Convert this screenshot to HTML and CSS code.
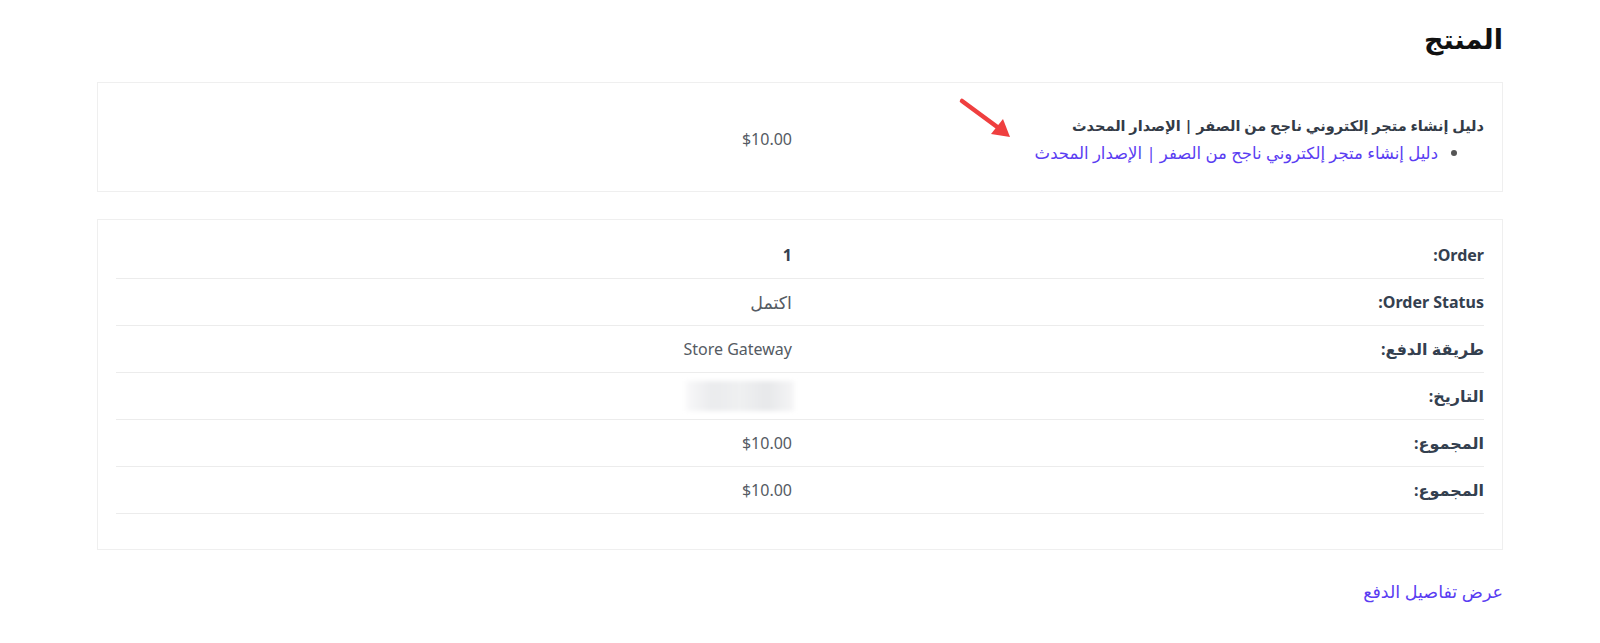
FILE: index.html
```html
<!DOCTYPE html>
<html lang="ar" dir="rtl">
<head>
  <meta charset="UTF-8">
  <title>تفاصيل الطلب</title>
  <link rel="stylesheet" href="styles.css">
</head>
<body>

  <main class="page">
    <h2 class="section-title">المنتج</h2>

    <div class="card card-products">
      <table class="products">
        <tr>
          <td class="product-cell">
            <div class="product-name">دليل إنشاء متجر إلكتروني ناجح من الصفر | الإصدار المحدث</div>
            <ul class="downloads">
              <li><a href="#">دليل إنشاء متجر إلكتروني ناجح من الصفر | الإصدار المحدث</a></li>
            </ul>
          </td>
          <td class="price">$10.00</td>
        </tr>
      </table>

      <!-- annotation arrow -->
      <svg class="arrow" width="60" height="50" viewBox="0 0 60 50">
        <line x1="6" y1="6" x2="44" y2="34" stroke="#ef3f3f" stroke-width="4.5" stroke-linecap="round"/>
        <polygon points="54,42 35,39 47,24" fill="#ef3f3f"/>
      </svg>
    </div>

    <div class="card card-details">
      <table class="details">
        <tr>
          <th>Order:</th>
          <td class="strong">1</td>
        </tr>
        <tr>
          <th>Order Status:</th>
          <td class="ar">اكتمل</td>
        </tr>
        <tr>
          <th>طريقة الدفع:</th>
          <td>Store Gateway</td>
        </tr>
        <tr>
          <th>التاريخ:</th>
          <td><div class="blurred"></div></td>
        </tr>
        <tr>
          <th>المجموع:</th>
          <td>$10.00</td>
        </tr>
        <tr>
          <th>المجموع:</th>
          <td>$10.00</td>
        </tr>
      </table>
    </div>

    <a class="pay-link" href="#">عرض تفاصيل الدفع</a>
  </main>

</body>
</html>
```

FILE: styles.css
```css
body {
  margin: 0;
  background-color: #fff;
  font-family: 'Noto Sans', 'DejaVu Sans', sans-serif;
  font-size: 16px;
  color: #555b63;
}

a {
  color: #5a3df2;
  text-decoration: none;
}

.page {
  padding: 22px 97px 40px;
}

.section-title {
  margin: 0 0 26px;
  font-size: 27px;
  line-height: 34px;
  font-weight: 700;
  color: #111;
}

.card {
  position: relative;
  border: 1px solid #efefef;
  padding: 20px 18px 16px;
  margin-bottom: 27px;
}

table {
  width: 100%;
  border-collapse: collapse;
  table-layout: fixed;
}

/* products */
.product-cell {
  width: 50%;
  padding: 8px 0;
  text-align: right;
  vertical-align: middle;
}

.product-name {
  font-size: 14.5px;
  font-weight: 700;
  line-height: 28px;
  color: #333b47;
}

.downloads {
  margin: 0;
  padding: 0 46px 0 0;
  font-size: 16.5px;
  line-height: 28px;
  color: #555;
}

.price {
  padding: 0 8px 0 0;
  text-align: right;
  vertical-align: middle;
}

.arrow {
  position: absolute;
  left: 858px;
  top: 12px;
}

/* order details */
.card-details {
  padding: 12px 18px 35px;
}

.details th,
.details td {
  height: 46px;
  padding: 0;
  border-bottom: 1px solid #ececec;
  text-align: right;
  vertical-align: middle;
}

.details th {
  width: 50%;
  font-weight: 700;
  color: #34404f;
}

.details td {
  padding-right: 8px;
}

.details td.strong {
  font-weight: 700;
  color: #34404f;
}

.details td.ar {
  font-size: 17.5px;
}

.blurred {
  width: 108px;
  height: 30px;
  margin-right: -2px;
  background: linear-gradient(90deg, #f8f8f9 0%, #eaebed 25%, #eff0f1 50%, #e7e8ea 75%, #f5f5f6 100%);
  filter: blur(2px);
}

.pay-link {
  display: inline-block;
  margin-top: 2px;
  font-size: 17.5px;
  line-height: 24px;
}
```
